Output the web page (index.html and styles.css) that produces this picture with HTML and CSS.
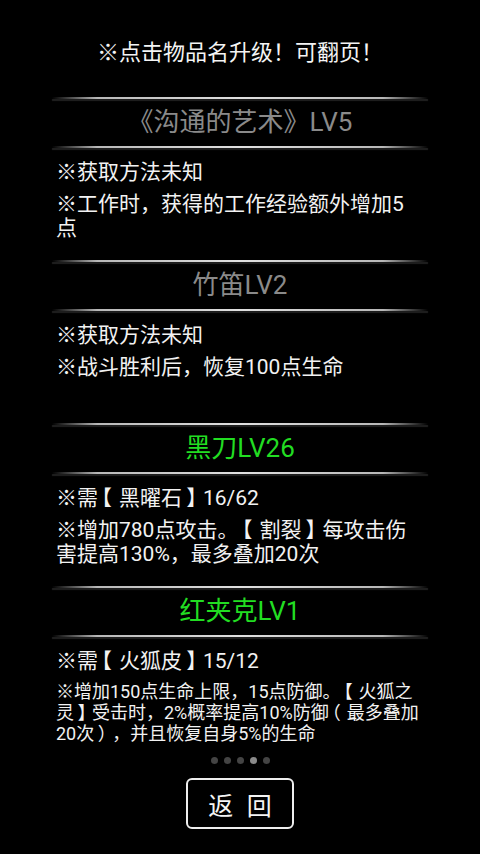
FILE: index.html
```html
<!DOCTYPE html>
<html lang="zh-CN">
<head>
    <meta charset="UTF-8" />
    <meta name="viewport" content="width=device-width, initial-scale=1" />
    <title>物品升级</title>
    <link rel="stylesheet" href="styles.css">
</head>
<body>
<div class="page">
    <div class="tip">※点击物品名升级！可翻页！</div>

    <div class="item">
        <div class="sep"></div>
        <div class="name locked">《沟通的艺术》LV5</div>
        <div class="sep"></div>
        <div class="desc">
            <p>※获取方法未知</p>
            <p>※工作时，获得的工作经验额外增加5点</p>
        </div>
    </div>

    <div class="item">
        <div class="sep"></div>
        <div class="name locked">竹笛LV2</div>
        <div class="sep"></div>
        <div class="desc">
            <p>※获取方法未知</p>
            <p>※战斗胜利后，恢复100点生命</p>
        </div>
    </div>

    <div class="item">
        <div class="sep"></div>
        <div class="name owned">黑刀LV26</div>
        <div class="sep"></div>
        <div class="desc">
            <p>※需<span class="op">【</span>黑曜石<span class="cl">】</span>16/62</p>
            <p>※增加780点攻击。<span class="op">【</span>割裂<span class="cl">】</span>每攻击伤害提高130%，最多叠加20次</p>
        </div>
    </div>

    <div class="item last">
        <div class="sep"></div>
        <div class="name owned">红夹克LV1</div>
        <div class="sep"></div>
        <div class="desc">
            <p>※需<span class="op">【</span>火狐皮<span class="cl">】</span>15/12</p>
            <p class="small">※增加150点生命上限，15点防御。<span class="op">【</span>火狐之灵<span class="cl">】</span>受击时，2%概率提高10%防御<span class="op">（</span>最多叠加20次<span class="cl">）</span>，并且恢复自身5%的生命</p>
        </div>
    </div>

    <div class="dots">
        <span></span><span></span><span></span><span class="on"></span><span></span>
    </div>

    <button class="back">返 回</button>
</div>
</body>
</html>
```

FILE: styles.css
```css
body {
  margin: 0;
  background: #000;
  color: #f2f2f2;
  font-family: Roboto, "Noto Sans CJK SC", sans-serif;
  text-spacing-trim: space-all;
}
.page {
  width: 480px;
  height: 854px;
  overflow: hidden;
}
.tip {
  height: 97px;
  padding-top: 38px;
  box-sizing: border-box;
  font-size: 22px;
  line-height: 30px;
  text-align: center;
  color: #f4f4f4;
}
.item {
  height: 163px;
}
.item.last {
  height: auto;
}
.sep {
  height: 2px;
  margin: 0 52px;
  background: linear-gradient(to right, rgba(200,200,200,0), #b8b8b8 12%, #e0e0e0 50%, #b8b8b8 88%, rgba(200,200,200,0));
  box-shadow: 0 2px 1px rgba(110,110,110,0.3);
}
.name {
  height: 47px;
  line-height: 47px;
  font-size: 26px;
  text-align: center;
}
.locked {
  color: #8a8a8a;
}
.owned {
  color: #22dd22;
}
.desc {
  width: 366px;
  padding: 12px 0 0 56px;
  font-size: 21px;
  line-height: 24px;
}
.desc p {
  margin: 0 0 8px;
}
.desc p.small {
  font-size: 18px;
  line-height: 21px;
}
/* brackets sit centred in the original font */
.op, .cl {
  display: inline-block;
  width: 1em;
  white-space: nowrap;
}
.op {
  text-indent: -0.33em;
}
.cl {
  text-indent: 0.2em;
}
.dots {
  display: flex;
  justify-content: center;
  gap: 6px;
  margin-top: 13px;
  margin-left: 1px;
}
.dots span {
  width: 7px;
  height: 7px;
  border-radius: 50%;
  background: #444;
}
.dots span.on {
  background: #8a8a8a;
}
.back {
  display: block;
  width: 108px;
  height: 51px;
  margin: 14px auto 0;
  padding: 0;
  background: #000;
  color: #f4f4f4;
  border: 2px solid #eee;
  border-radius: 6px;
  font-family: "Noto Sans CJK SC", sans-serif;
  font-size: 25px;
  word-spacing: 8px;
}
```
